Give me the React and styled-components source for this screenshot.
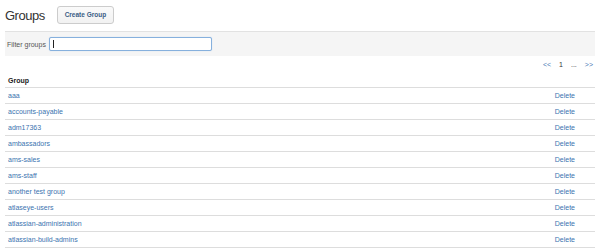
import React from 'react'
import styled, { createGlobalStyle } from 'styled-components'

const GlobalStyle = createGlobalStyle`
  body {
    margin: 0;
    background: #fff;
    font-family: 'Liberation Sans', Arial, sans-serif;
    color: #333;
  }
`

const Page = styled.div`
  width: 600px;
  height: 250px;
  overflow: hidden;
  padding: 0 5px;
  box-sizing: border-box;
`

const Header = styled.div`
  display: flex;
  align-items: center;
  gap: 12px;
  height: 31px;
  padding-bottom: 1px;
  box-sizing: border-box;
`

const Title = styled.h1`
  margin: 0;
  font-size: 13px;
  font-weight: 400;
  letter-spacing: -0.5px;
  color: #333;
`

const Button = styled.button`
  height: 18px;
  padding: 0 7px;
  border: 1px solid #ccc;
  border-radius: 3px;
  background: linear-gradient(#fafafa, #f2f2f2);
  font-family: inherit;
  font-size: 6.5px;
  font-weight: 700;
  color: #3b5d85;
  margin-bottom: 1px;
`

const FilterBar = styled.div`
  display: flex;
  align-items: center;
  gap: 3px;
  height: 24px;
  padding: 0 2px;
  background: #f5f5f5;
  border-top: 1px solid #e2e2e2;
`

const Label = styled.label`
  font-size: 7px;
  color: #555;
`

const Input = styled.div`
  width: 158px;
  height: 12px;
  border: 1.5px solid #86b0dd;
  border-radius: 2px;
  background: #fff;
  display: flex;
  align-items: center;
  padding-left: 3px;
  box-shadow: 0 0 1px #a8c8ea;
  &::before {
    content: '';
    width: 1px;
    height: 8px;
    background: #222;
  }
`

const Pager = styled.div`
  display: flex;
  justify-content: flex-end;
  align-items: center;
  gap: 8px;
  height: 17px;
  padding-right: 2px;
  font-size: 7px;
`

const PageLink = styled.span`
  color: ${p => (p.$current ? '#333' : '#4a7bb5')};
`

const Table = styled.div`
  display: flex;
  flex-direction: column;
`

const HeadRow = styled.div`
  display: flex;
  align-items: center;
  height: 14px;
  padding: 0 3px;
  border-bottom: 1px solid #ddd;
  font-size: 7px;
  font-weight: 700;
  color: #222;
`

const Row = styled.div`
  display: flex;
  justify-content: space-between;
  align-items: center;
  height: 15px;
  padding: 0 20px 0 3px;
  border-bottom: 1px solid #ddd;
  font-size: 7px;
`

const Link = styled.a`
  color: #3b73af;
  text-decoration: none;
`

const groups = [
  'aaa',
  'accounts-payable',
  'adm17363',
  'ambassadors',
  'ams-sales',
  'ams-staff',
  'another test group',
  'atlaseye-users',
  'atlassian-administration',
  'atlassian-build-admins',
]

export default function App() {
  return (
    <Page>
      <GlobalStyle />
      <Header>
        <Title>Groups</Title>
        <Button>Create Group</Button>
      </Header>
      <FilterBar>
        <Label>Filter groups</Label>
        <Input />
      </FilterBar>
      <Pager>
        <PageLink>&lt;&lt;</PageLink>
        <PageLink $current>1</PageLink>
        <PageLink $current>...</PageLink>
        <PageLink>&gt;&gt;</PageLink>
      </Pager>
      <Table>
        <HeadRow>Group</HeadRow>
        {groups.map(g => (
          <Row key={g}>
            <Link>{g}</Link>
            <Link>Delete</Link>
          </Row>
        ))}
      </Table>
    </Page>
  )
}
